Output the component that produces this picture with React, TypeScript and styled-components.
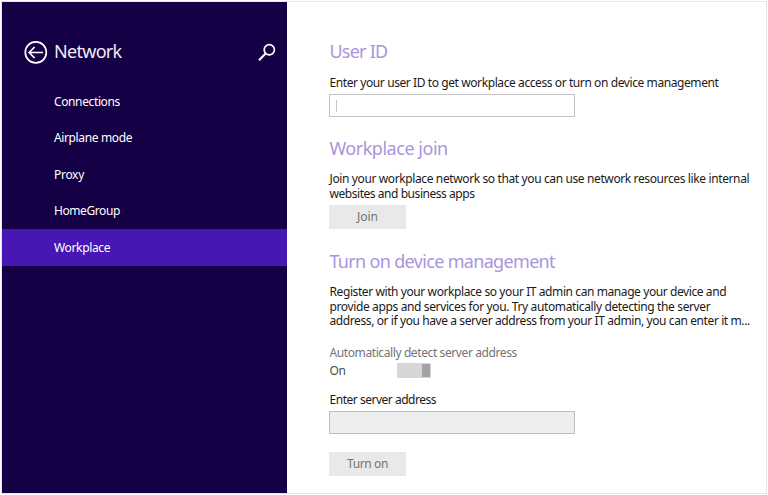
import React from "react";
import styled, { createGlobalStyle } from "styled-components";

const GlobalStyle = createGlobalStyle`
  * { box-sizing: border-box; }
  body {
    margin: 0;
    background: #fff;
    font-family: "Noto Sans", "Open Sans", sans-serif;
    font-size: 12px;
    color: #1a1a1a;
    overflow: hidden;
  }
`;

const Page = styled.div`
  width: 768px;
  height: 495px;
  padding: 1px;
`;

const Window = styled.div`
  display: flex;
  width: 766px;
  height: 493px;
  border: 1px solid #e6e6e8;
  background: #fff;
`;

const Sidebar = styled.aside`
  width: 285px;
  height: 491px;
  flex: none;
  background: #160045;
  color: #fff;
`;

const SidebarHeader = styled.header`
  display: flex;
  align-items: center;
  height: 81px;
  padding: 19px 11px 0 21px;
`;

const SidebarTitle = styled.h1`
  margin: 0 auto 0 5px;
  padding-bottom: 2px;
  font-size: 18px;
  line-height: 24px;
  font-weight: 400;
  letter-spacing: -0.7px;
  color: #eeebf4;
`;

const Nav = styled.nav`
  display: grid;
  grid-template-rows: 36px 37px 36px 37px 37px;
`;

const NavItem = styled.a<{ $active?: boolean; $track: number }>`
  display: flex;
  align-items: center;
  padding: 0 0 0 52px;
  background: ${(p) => (p.$active ? "#4617b4" : "transparent")};
  letter-spacing: ${(p) => p.$track}px;
`;

const Content = styled.main`
  display: flex;
  flex-direction: column;
  flex: 1;
  padding: 37px 0 0 42px;
`;

const Section = styled.section<{ $height: number }>`
  display: flex;
  flex-direction: column;
  align-items: flex-start;
  height: ${(p) => p.$height}px;
`;

const Heading = styled.h2<{ $track: number; $gap?: number }>`
  margin: 0 0 ${(p) => p.$gap ?? 11}px;
  padding-left: 0.4px;
  font-size: 18px;
  line-height: 24px;
  font-weight: 400;
  color: #ab94dc;
  letter-spacing: ${(p) => p.$track}px;
  white-space: nowrap;
`;

const Line = styled.div<{ $track: number; $height?: number; $color?: string }>`
  height: ${(p) => p.$height ?? 15}px;
  padding-left: 0.5px;
  line-height: 15px;
  letter-spacing: ${(p) => p.$track}px;
  color: ${(p) => p.$color ?? "#1a1a1a"};
  white-space: nowrap;
`;

const Field = styled.div<{ $disabled?: boolean }>`
  display: flex;
  align-items: center;
  width: 246px;
  height: 23px;
  margin-top: 4px;
  margin-bottom: ${(p) => (p.$disabled ? 18 : 0)}px;
  padding-left: 6px;
  border: 1px solid ${(p) => (p.$disabled ? "#bebebe" : "#c3c3c3")};
  background: ${(p) => (p.$disabled ? "#eee" : "#fff")};
`;

const Caret = styled.span`
  width: 1px;
  height: 12px;
  background: #c4c4c4;
`;

const Button = styled.button<{ $track: number }>`
  width: 77px;
  height: 24px;
  padding: 0;
  border: 0;
  background: #e9e9e9;
  color: #737373;
  font: 12px/24px "Noto Sans", "Open Sans", sans-serif;
  letter-spacing: ${(p) => p.$track}px;
`;

const ToggleRow = styled.div`
  display: flex;
  align-items: center;
  height: 17px;
  margin-bottom: 13px;
`;

const ToggleLabel = styled.span`
  width: 68px;
  padding-left: 0.5px;
  color: #4d4d4d;
  letter-spacing: -0.4px;
`;

const Toggle = styled.span`
  display: flex;
  justify-content: flex-end;
  width: 34px;
  height: 15px;
  padding: 1px;
  background: #d6d6d6;
`;

const Thumb = styled.span`
  width: 8px;
  height: 13px;
  background: #a3a3a3;
`;

const BackIcon = () => (
  <svg width="26" height="26" viewBox="0 0 26 26" fill="none" stroke="#fff">
    <circle cx="12.8" cy="13.4" r="10.5" strokeWidth="1.7" />
    <path d="M20 13.5H7M11.6 8 6.2 13.5l5.4 5.5" strokeWidth="1.7" />
  </svg>
);

const SearchIcon = () => (
  <svg width="18" height="18" viewBox="0 0 18 18" fill="none" stroke="#fff">
    <circle cx="11.3" cy="6.8" r="5.1" strokeWidth="1.7" />
    <path d="M7.6 10.5 1 17.2" strokeWidth="2" />
  </svg>
);

const pages = [
  { name: "Connections", track: -0.38 },
  { name: "Airplane mode", track: -0.37 },
  { name: "Proxy", track: -0.3 },
  { name: "HomeGroup", track: -0.42 },
  { name: "Workplace", track: -0.35, active: true },
];

export default function App() {
  return (
    <Page>
      <GlobalStyle />
      <Window>
        <Sidebar>
          <SidebarHeader>
            <BackIcon />
            <SidebarTitle>Network</SidebarTitle>
            <SearchIcon />
          </SidebarHeader>
          <Nav>
            {pages.map((p) => (
              <NavItem key={p.name} $active={p.active} $track={p.track}>
                {p.name}
              </NavItem>
            ))}
          </Nav>
        </Sidebar>
        <Content>
          <Section $height={97}>
            <Heading $track={-0.75} $gap={12}>User ID</Heading>
            <Line $track={-0.41}>
              Enter your user ID to get workplace access or turn on device management
            </Line>
            <Field>
              <Caret />
            </Field>
          </Section>
          <Section $height={113}>
            <Heading $track={-0.47}>Workplace join</Heading>
            <Line $track={-0.38}>
              Join your workplace network so that you can use network resources like internal
            </Line>
            <Line $track={-0.45} $height={19}>websites and business apps</Line>
            <Button $track={0}>Join</Button>
          </Section>
          <Section $height={240}>
            <Heading $track={-0.67}>Turn on device management</Heading>
            <Line $track={-0.41}>
              Register with your workplace so your IT admin can manage your device and
            </Line>
            <Line $track={-0.37} $height={14}>
              provide apps and services for you. Try automatically detecting the server
            </Line>
            <Line $track={-0.405} $height={32}>
              address, or if you have a server address from your IT admin, you can enter it m...
            </Line>
            <Line $track={-0.4} $height={17} $color="#737373">
              Automatically detect server address
            </Line>
            <ToggleRow>
              <ToggleLabel>On</ToggleLabel>
              <Toggle>
                <Thumb />
              </Toggle>
            </ToggleRow>
            <Line $track={-0.48}>Enter server address</Line>
            <Field $disabled />
            <Button $track={-0.39}>Turn on</Button>
          </Section>
        </Content>
      </Window>
    </Page>
  );
}
